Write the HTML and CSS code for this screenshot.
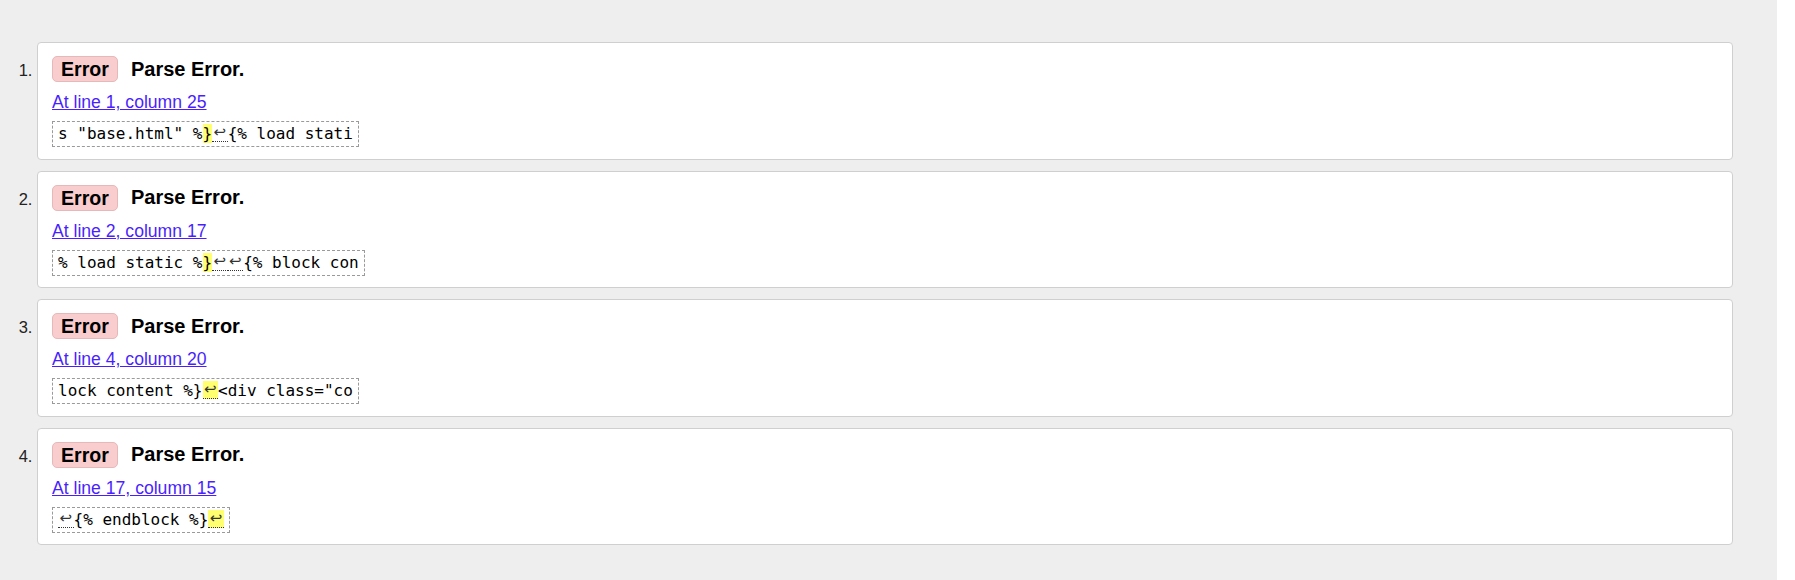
FILE: index.html
```html
<!DOCTYPE html>
<html lang="en">
<head>
<meta charset="utf-8">
<title>Parse Errors</title>
<link rel="stylesheet" href="styles.css">
</head>
<body>
<div class="page">
  <ol class="errors">
    <li>
      <div class="card">
        <div class="head"><span class="badge">Error</span><span class="title">Parse Error.</span></div>
        <div class="loc"><a href="#">At line 1, column 25</a></div>
        <div class="code">s "base.html" %<span class="hl">}</span><span class="nl">↩</span>{% load stati</div>
      </div>
    </li>
    <li>
      <div class="card">
        <div class="head"><span class="badge">Error</span><span class="title">Parse Error.</span></div>
        <div class="loc"><a href="#">At line 2, column 17</a></div>
        <div class="code">% load static %<span class="hl">}</span><span class="nl">↩</span><span class="nl">↩</span>{% block con</div>
      </div>
    </li>
    <li>
      <div class="card">
        <div class="head"><span class="badge">Error</span><span class="title">Parse Error.</span></div>
        <div class="loc"><a href="#">At line 4, column 20</a></div>
        <div class="code">lock content %}<span class="nl hl">↩</span>&lt;div class="co</div>
      </div>
    </li>
    <li>
      <div class="card">
        <div class="head"><span class="badge">Error</span><span class="title">Parse Error.</span></div>
        <div class="loc"><a href="#">At line 17, column 15</a></div>
        <div class="code"><span class="nl">↩</span>{% endblock %}<span class="nl hl">↩</span></div>
      </div>
    </li>
  </ol>
</div>
</body>
</html>
```

FILE: styles.css
```css
html, body {
  margin: 0;
  padding: 0;
  background: #ffffff;
}

.page {
  width: 1777px;
  min-height: 580px;
  box-sizing: border-box;
  background: #eeeeee;
  padding-top: 42px;
  font-family: "Liberation Sans", Arial, sans-serif;
  color: #000;
}

.errors {
  margin: 0;
  padding: 0 44px 0 37px;
  font-size: 16px;
}

.errors li {
  margin-bottom: 11px;
}

.errors li::marker {
  color: #222;
  font-size: 16.5px;
}

.card {
  background: #ffffff;
  border: 1px solid #cfcfcf;
  border-radius: 4px;
  padding: 13px 14px 11.5px 14px;
}

.head {
  display: flex;
  align-items: center;
  gap: 13px;
}

.badge {
  display: inline-block;
  font-size: 19.6px;
  font-weight: bold;
  line-height: 22px;
  padding: 1px 8px;
  background: #f9cdcd;
  border: 1px solid #e5b9b9;
  border-radius: 5px;
}

.title {
  font-size: 20px;
  font-weight: bold;
}

.loc {
  margin-top: 10px;
  font-size: 17.6px;
  line-height: 20px;
}

.loc a {
  color: #4a1fff;
  text-decoration: underline;
}

.code {
  display: inline-block;
  margin-top: 9px;
  border: 1px dashed #9a9a9a;
  padding: 2px 5px 3px 5px;
  font-family: "DejaVu Sans Mono", "Liberation Mono", monospace;
  font-size: 16px;
  line-height: 19px;
  white-space: pre;
}

.hl {
  background: #ffff70;
}

.nl {
  display: inline-block;
  width: 15.5px;
  text-align: center;
  font-family: "DejaVu Sans", sans-serif;
  font-size: 15px;
  line-height: 17px;
  color: #333;
  border-bottom: 1px dotted #333;
  vertical-align: top;
}
```
